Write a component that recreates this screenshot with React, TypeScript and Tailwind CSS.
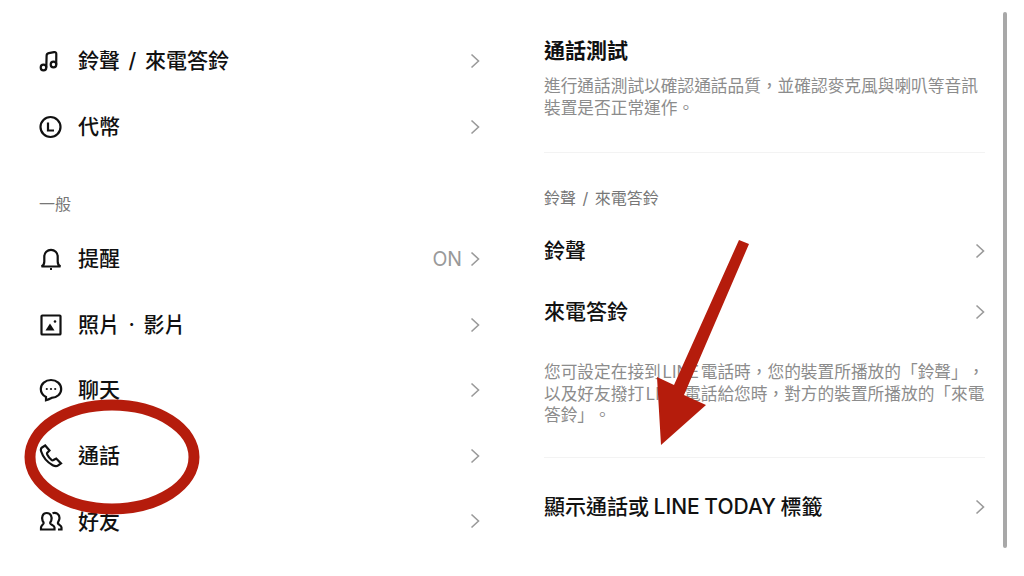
import type { ReactNode } from "react";

const iconClass = "h-[24px] w-[24px] shrink-0 fill-none stroke-[#111] stroke-[2.2]";

function Chevron() {
  return (
    <svg viewBox="0 0 10 16" className="h-[16px] w-[10px] fill-none stroke-[#9a9a9a] stroke-[1.6]">
      <path d="M1.500 1.500 8.500 8l-7 6.500" />
    </svg>
  );
}

const NoteIcon = (
  <svg viewBox="0 0 24 24" className={iconClass}>
    <circle cx="4.500" cy="18.500" r="2.800" />
    <circle cx="14.500" cy="15.500" r="2.800" />
    <path d="M7.300 18.500 7.600 6.800c0-1.500.7-2.300 2.200-2.600l5.200-1c1.600-.3 2.400.4 2.300 2l-.1 10.300" />
  </svg>
);

const ClockIcon = (
  <svg viewBox="0 0 24 24" className={iconClass}>
    <circle cx="11.500" cy="12" r="10" />
    <path d="M9 7.500v8h6" />
  </svg>
);

const BellIcon = (
  <svg viewBox="0 0 24 24" className={iconClass}>
    <path d="M2.500 19.500c2-1 2.800-2.500 2.800-5V9.500a6.700 6.700 0 0 1 13.400 0v5c0 2.500.8 4 2.800 5z" />
    <path d="M11 22h2" />
  </svg>
);

const PhotoIcon = (
  <svg viewBox="0 0 24 24" className={iconClass}>
    <rect x="2.500" y="2.500" width="19" height="19" rx="0.800" />
    <path d="M6.500 17.500 11 10.500l4.500 7z" className="fill-[#111] stroke-none" />
    <circle cx="16" cy="8.500" r="1.300" className="fill-[#111] stroke-none" />
  </svg>
);

const ChatIcon = (
  <svg viewBox="0 0 24 24" className={iconClass}>
    <path d="M12 2C6.300 2 1.800 6 1.800 11c0 3.700 2.300 6.500 5.200 8v3.200c2.300-.7 4.300-1.700 5.500-2.300 5.500-.2 9.700-4 9.700-8.900S17.700 2 12 2z" />
    <circle cx="7.800" cy="11" r="1.100" className="fill-[#111] stroke-none" />
    <circle cx="12" cy="11" r="1.100" className="fill-[#111] stroke-none" />
    <circle cx="16.200" cy="11" r="1.100" className="fill-[#111] stroke-none" />
  </svg>
);

const PhoneIcon = (
  <svg viewBox="0 0 24 24" className={iconClass}>
    <path d="M6.200 1.500 3 3.500c-1.200.8-1.300 2.500-.8 4 1.800 5.500 6.500 11 11.500 13.700 1.900 1 4 1.300 5.500.2l2.800-2-4.800-4.900-2.700 1.500c-.7.400-1.500.3-2.100-.2-1.700-1.500-3.200-3.400-4.200-5.400-.3-.7-.2-1.400.3-1.900l2-2z" />
  </svg>
);

const FriendsIcon = (
  <svg viewBox="0 0 24 24" className={iconClass}>
    <path d="M2 20.500h13.500v-2c0-2.400-3.800-2.500-4.300-4.300-.2-.9.700-1.600 1.100-2.800.9-3-.2-7.400-4.600-7.400S2.600 8.400 3.500 11.400c.4 1.200 1.300 1.900 1.100 2.800C4.100 16 2 16.300 2 18.500z" />
    <path d="M13.500 4.300c3.500-1.300 7 .8 7 4.700 0 2.500-1.900 3.800-1.600 5.300.3 1.600 3.600 1.900 3.600 4.200v2h-3.500" />
  </svg>
);

function MenuRow({ icon, label, value }: { icon: ReactNode; label: string; value?: string }) {
  return (
    <div className="flex h-[65.6px] items-center">
      <div className="flex w-[39px] items-center">{icon}</div>
      <span className="flex-1 text-[21px] font-medium text-[#111] [word-spacing:3px]">{label}</span>
      {value && <span className="mr-[8px] pt-[2px] text-[19.5px] text-[#999]">{value}</span>}
      <Chevron />
    </div>
  );
}

function LinkRow({ label, className }: { label: string; className: string }) {
  return (
    <div className={`flex items-center justify-between ${className}`}>
      <span className="text-[21px] font-medium text-[#111] [word-spacing:-1px]">{label}</span>
      <Chevron />
    </div>
  );
}

export default function App() {
  return (
    <main
      className="relative flex h-[576px] w-[1024px] overflow-hidden bg-white [text-spacing-trim:space-all]"
      style={{ fontFamily: '"Inter", "Noto Sans CJK TC", sans-serif' }}
    >
      <section className="w-[544px] pl-[39px] pr-[64px] pt-[28.4px]">
        <MenuRow icon={NoteIcon} label="鈴聲 / 來電答鈴" />
        <MenuRow icon={ClockIcon} label="代幣" />
        <h3 className="flex h-[66.6px] items-end pb-[10px] text-[16px] text-[#777]">一般</h3>
        <MenuRow icon={BellIcon} label="提醒" value="ON" />
        <MenuRow icon={PhotoIcon} label="照片 · 影片" />
        <MenuRow icon={ChatIcon} label="聊天" />
        <MenuRow icon={PhoneIcon} label="通話" />
        <MenuRow icon={FriendsIcon} label="好友" />
      </section>

      <section className="w-[441px] pt-[36px]">
        <h2 className="h-[30px] text-[21px] leading-[30px] font-bold text-[#111]">通話測試</h2>
        <p className="mt-[10px] text-[16.7px] leading-[21.500px] text-[#8c8c8c]">
          進行通話測試以確認通話品質，並確認麥克風與喇叭等音訊裝置是否正常運作。
        </p>
        <div className="mt-[33px] border-t border-[#f3f3f3]" />
        <h3 className="mt-[34px] text-[16px] leading-[22px] text-[#777] [word-spacing:2px]">鈴聲 / 來電答鈴</h3>
        <LinkRow label="鈴聲" className="mt-[11px] h-[61px]" />
        <LinkRow label="來電答鈴" className="h-[61px]" />
        <p className="mt-[20px] text-[16.7px] leading-[21.500px] whitespace-nowrap text-[#8c8c8c] [word-spacing:-3px]">
          您可設定在接到 LINE 電話時，您的裝置所播放的「鈴聲」，
          <br />
          以及好友撥打 LINE 電話給您時，對方的裝置所播放的「來電
          <br />
          答鈴」。
        </p>
        <div className="mt-[30px] border-t border-[#f3f3f3]" />
        <LinkRow label="顯示通話或 LINE TODAY 標籤" className="mt-[25px] h-[49px]" />
      </section>

      <div className="absolute left-[1003px] top-[12px] h-[536px] w-[4px] rounded-full bg-[#a8a8a8]" />

      <svg viewBox="0 0 1024 576" className="pointer-events-none absolute inset-0 h-[576px] w-[1024px]">
        <ellipse cx="112" cy="457" rx="82" ry="52" fill="none" stroke="#b51c0c" strokeWidth="11" />
        <path d="M739 240 749 244 684 395 706 405 661 445 657 377 674 385Z" fill="#b51c0c" />
      </svg>
    </main>
  );
}
